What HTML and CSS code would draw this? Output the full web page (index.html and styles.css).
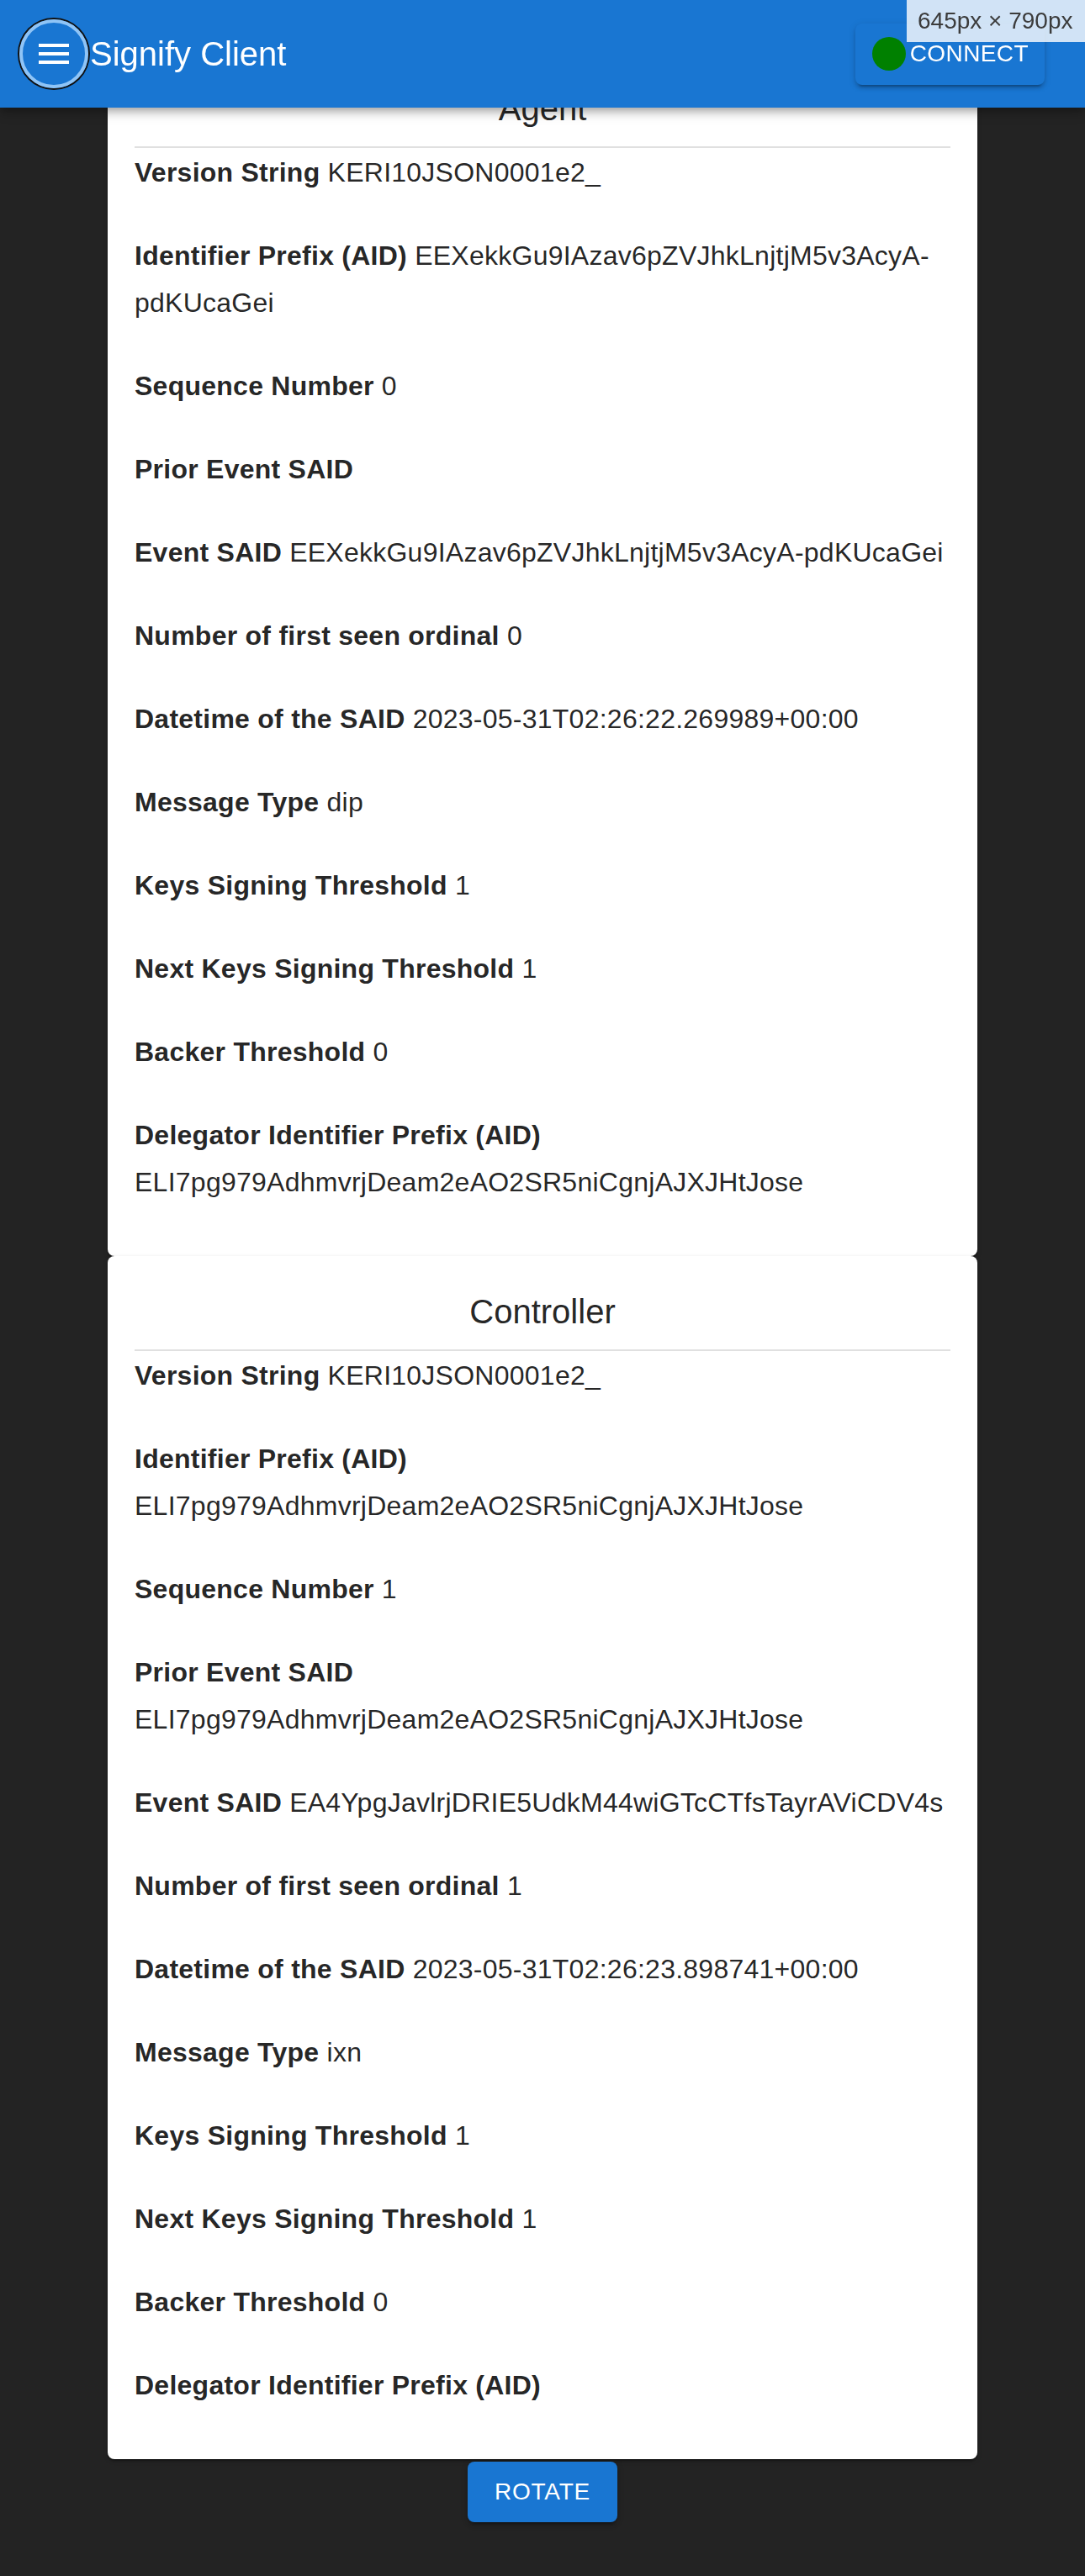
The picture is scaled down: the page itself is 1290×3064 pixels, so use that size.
FILE: index.html
```html
<!DOCTYPE html>
<html lang="en">
<head>
<meta charset="utf-8">
<title>Signify Client</title>
<link rel="stylesheet" href="styles.css">
</head>
<body>
<header class="appbar">
  <button class="menu-btn" aria-label="menu">
    <svg class="menu-icon" viewBox="0 0 24 24" width="48" height="48"><path fill="#fff" d="M3 18h18v-2H3v2zm0-5h18v-2H3v2zm0-7v2h18V6H3z"/></svg>
  </button>
  <div class="app-title">Signify Client</div>
  <button class="connect-btn"><span class="status-dot"></span>CONNECT</button>
</header>
<div class="size-badge">645px × 790px</div>

<main class="content">
  <section class="card">
    <h2 class="card-title">Agent</h2>
    <div class="divider"></div>
    <p class="row"><span class="label">Version String</span> KERI10JSON0001e2_</p>
    <p class="row"><span class="label">Identifier Prefix (AID)</span> EEXekkGu9IAzav6pZVJhkLnjtjM5v3AcyA-pdKUcaGei</p>
    <p class="row"><span class="label">Sequence Number</span> 0</p>
    <p class="row"><span class="label">Prior Event SAID</span> </p>
    <p class="row"><span class="label">Event SAID</span> EEXekkGu9IAzav6pZVJhkLnjtjM5v3AcyA-pdKUcaGei</p>
    <p class="row"><span class="label">Number of first seen ordinal</span> 0</p>
    <p class="row"><span class="label">Datetime of the SAID</span> 2023-05-31T02:26:22.269989+00:00</p>
    <p class="row"><span class="label">Message Type</span> dip</p>
    <p class="row"><span class="label">Keys Signing Threshold</span> 1</p>
    <p class="row"><span class="label">Next Keys Signing Threshold</span> 1</p>
    <p class="row"><span class="label">Backer Threshold</span> 0</p>
    <p class="row"><span class="label">Delegator Identifier Prefix (AID)</span> ELI7pg979AdhmvrjDeam2eAO2SR5niCgnjAJXJHtJose</p>
  </section>

  <section class="card">
    <h2 class="card-title">Controller</h2>
    <div class="divider"></div>
    <p class="row"><span class="label">Version String</span> KERI10JSON0001e2_</p>
    <p class="row"><span class="label">Identifier Prefix (AID)</span> ELI7pg979AdhmvrjDeam2eAO2SR5niCgnjAJXJHtJose</p>
    <p class="row"><span class="label">Sequence Number</span> 1</p>
    <p class="row"><span class="label">Prior Event SAID</span> ELI7pg979AdhmvrjDeam2eAO2SR5niCgnjAJXJHtJose</p>
    <p class="row"><span class="label">Event SAID</span> EA4YpgJavlrjDRIE5UdkM44wiGTcCTfsTayrAViCDV4s</p>
    <p class="row"><span class="label">Number of first seen ordinal</span> 1</p>
    <p class="row"><span class="label">Datetime of the SAID</span> 2023-05-31T02:26:23.898741+00:00</p>
    <p class="row"><span class="label">Message Type</span> ixn</p>
    <p class="row"><span class="label">Keys Signing Threshold</span> 1</p>
    <p class="row"><span class="label">Next Keys Signing Threshold</span> 1</p>
    <p class="row"><span class="label">Backer Threshold</span> 0</p>
    <p class="row"><span class="label">Delegator Identifier Prefix (AID)</span> </p>
  </section>

  <div class="actions">
    <button class="rotate-btn">ROTATE</button>
  </div>
</main>
</body>
</html>
```
FILE: styles.css
```css
html, body {
  margin: 0;
  padding: 0;
}
body {
  background: #232323;
  font-family: "Liberation Sans", Arial, Helvetica, sans-serif;
  color: rgba(0, 0, 0, 0.87);
}
button {
  font-family: inherit;
  border: none;
  cursor: pointer;
}

/* App bar */
.appbar {
  position: fixed;
  top: 0;
  left: 0;
  right: 0;
  height: 128px;
  background: #1976d2;
  display: flex;
  align-items: center;
  padding: 0 48px 0 23px;
  box-sizing: border-box;
  z-index: 10;
  box-shadow: 0 4px 8px -2px rgba(0,0,0,0.2), 0 8px 10px 0 rgba(0,0,0,0.14), 0 2px 20px 0 rgba(0,0,0,0.12);
}
.menu-btn {
  width: 82px;
  height: 82px;
  border-radius: 50%;
  border: 4px solid #8fc4f6;
  box-shadow: 0 0 0 2px #111;
  background: transparent;
  box-sizing: border-box;
  padding: 0;
  display: flex;
  align-items: center;
  justify-content: center;
  flex: none;
}
.menu-icon {
  display: block;
}
.app-title {
  color: #fff;
  font-size: 40px;
  line-height: 64px;
  margin-left: 2px;
  flex: 1;
}
.connect-btn {
  height: 73px;
  background: #1976d2;
  color: #fff;
  font-size: 28px;
  letter-spacing: 0.4px;
  border-radius: 8px;
  display: flex;
  align-items: center;
  gap: 5px;
  padding: 0 19px 0 20px;
  box-shadow: 0 6px 2px -4px rgba(0,0,0,0.2), 0 4px 4px 0 rgba(0,0,0,0.14), 0 2px 10px 0 rgba(0,0,0,0.12);
}
.status-dot {
  width: 40px;
  height: 40px;
  border-radius: 50%;
  background: #008000;
  flex: none;
}

/* Window-size badge overlay */
.size-badge {
  position: fixed;
  top: 0;
  right: 0;
  height: 50px;
  width: 212px;
  box-sizing: border-box;
  padding: 0 0 0 13px;
  background: rgba(255, 255, 255, 0.8);
  color: #3c3c3c;
  font-size: 28px;
  line-height: 50px;
  z-index: 20;
}

/* Content */
.content {
  width: 1034px;
  margin: 0 auto;
  padding-top: 63px;
}
.card {
  background: #fff;
  border-radius: 8px;
  padding: 34px 32px 17px;
  box-shadow: 0 4px 2px -2px rgba(0,0,0,0.2), 0 2px 2px 0 rgba(0,0,0,0.14), 0 2px 6px 0 rgba(0,0,0,0.12);
}
.card-title {
  margin: 0 0 13px;
  font-size: 40px;
  line-height: 64px;
  font-weight: 400;
  text-align: center;
  color: rgba(0, 0, 0, 0.87);
}
.divider {
  height: 2px;
  background: #e0e0e0;
  margin-bottom: 1px;
}
.row {
  margin: 0 0 43px;
  font-size: 32px;
  line-height: 56px;
  letter-spacing: 0.25px;
  color: rgba(0, 0, 0, 0.87);
}
.label {
  font-weight: 700;
}

.actions {
  display: flex;
  justify-content: center;
  padding: 3px 0 65px;
}
.rotate-btn {
  width: 178px;
  height: 72px;
  background: #1976d2;
  color: #fff;
  font-size: 28px;
  letter-spacing: 0.8px;
  border-radius: 8px;
  box-shadow: 0 6px 2px -4px rgba(0,0,0,0.2), 0 4px 4px 0 rgba(0,0,0,0.14), 0 2px 10px 0 rgba(0,0,0,0.12);
}
```
